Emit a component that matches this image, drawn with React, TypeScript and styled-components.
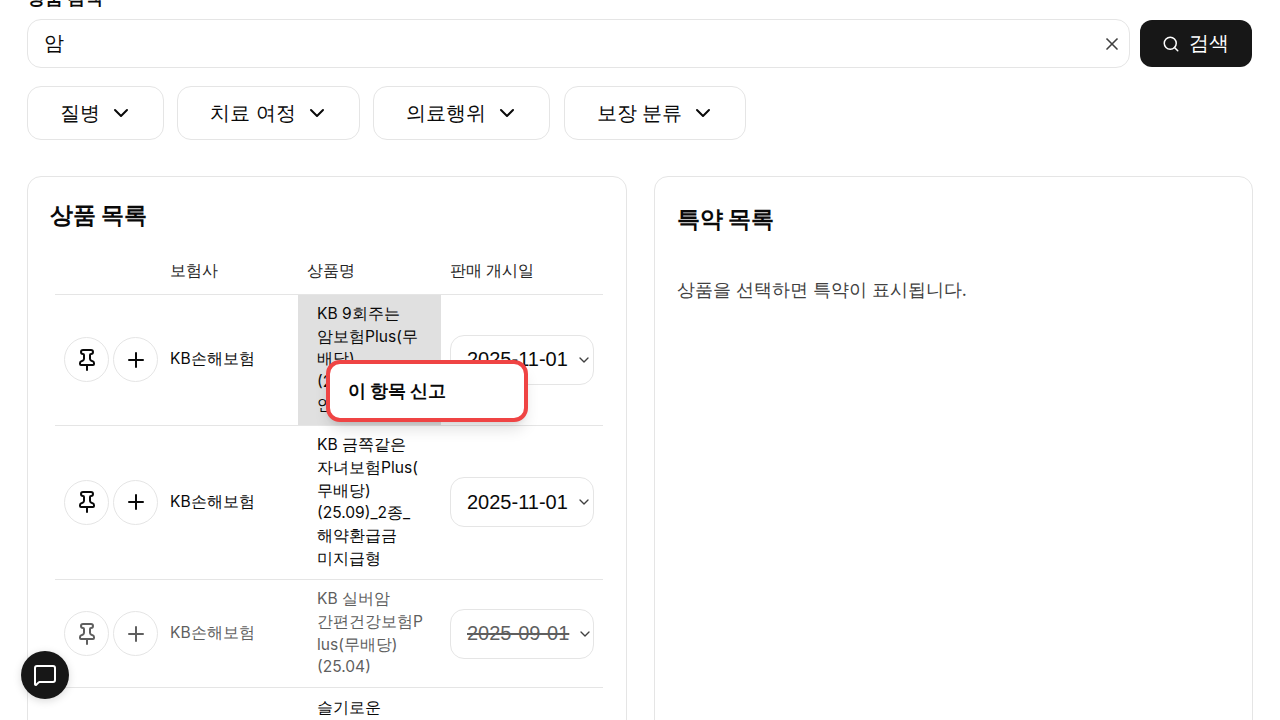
import React from "react";
import styled, { createGlobalStyle } from "styled-components";
import { ChevronDown, MessageSquare, Pin, Plus, Search, X } from "lucide-react";

const Global = createGlobalStyle`
  html, body { margin: 0; height: 720px; overflow: hidden; background: #fff; }
  body { font-family: Inter, sans-serif; color: #0a0a0a; }
  * { box-sizing: border-box; }
`;

const Page = styled.main`
  position: relative;
  height: 720px;
  overflow: hidden;
`;
const Content = styled.div`
  margin-top: -14px;
  padding: 0 27px;
`;
const SearchLabel = styled.div`
  font-size: 17.5px;
  font-weight: 700;
  line-height: 24px;
  margin-bottom: 9px;
`;
const SearchRow = styled.div`
  display: flex;
  gap: 10px;
  align-items: center;
  padding-right: 1px;
`;
const InputBox = styled.div`
  flex: 1;
  height: 49px;
  border: 1px solid #e5e5e5;
  border-radius: 14px;
  display: flex;
  align-items: center;
  justify-content: space-between;
  padding: 0 7px 0 16px;
  font-size: 20.25px;
`;
const ClearBtn = styled.span`
  display: flex;
  color: #404040;
`;
const SearchBtn = styled.button`
  width: 112px;
  height: 47px;
  border: 0;
  border-radius: 12px;
  background: #171717;
  color: #fff;
  font: inherit;
  font-size: 20.25px;
  display: flex;
  align-items: center;
  justify-content: center;
  gap: 9px;
  padding: 0 2px 0 0;
`;
const Filters = styled.div`
  display: flex;
  gap: 13.3px;
  margin-top: 18px;
`;
const FilterBtn = styled.button`
  height: 54px;
  padding: 0 30.25px 0 32px;
  border: 1px solid #e5e5e5;
  border-radius: 14px;
  background: #fff;
  color: #0a0a0a;
  font: inherit;
  font-size: 20.25px;
  display: flex;
  align-items: center;
  gap: 8.75px;
`;
const Columns = styled.div`
  display: grid;
  grid-template-columns: 600px 599px;
  gap: 27px;
  margin-top: 36px;
`;
const Card = styled.section`
  height: 800px;
  border: 1px solid #e5e5e5;
  border-radius: 14px;
  padding: 21px 22px;
`;
const Title = styled.h2<{ $offset?: number }>`
  margin: ${(p) => p.$offset ?? 0}px 0 0;
  font-size: 22.5px;
  font-weight: 700;
  line-height: 34px;
`;
const Hint = styled.p`
  margin: 40px 0 0;
  font-size: 17.5px;
  line-height: 27px;
  color: #404040;
`;
const Table = styled.table`
  width: 548px;
  margin: 14px 0 0 5px;
  table-layout: fixed;
  border-collapse: collapse;
  font-size: 15.575px;
  line-height: 22.75px;
`;
const Th = styled.th`
  height: 48px;
  padding: 3px 9px 0;
  text-align: left;
  font-weight: 400;
  color: #262626;
  border-bottom: 1px solid #e5e5e5;
`;
const Row = styled.tr`
  border-bottom: 1px solid #e5e5e5;
`;
const Td = styled.td<{ $off?: boolean }>`
  padding: 8.25px 9px;
  vertical-align: middle;
  color: ${(p) => (p.$off ? "#5f5f5f" : "#0a0a0a")};
`;
const NameTd = styled(Td)<{ $hover?: boolean }>`
  background: ${(p) => (p.$hover ? "#e0e0e0" : "transparent")};
`;
const NameText = styled.div`
  padding: 0 7px 0 10px;
  word-break: keep-all;
  overflow-wrap: anywhere;
  white-space: pre-line;
`;
const Actions = styled.div`
  display: flex;
  gap: 4px;
`;
const RoundBtn = styled.button<{ $off?: boolean }>`
  flex: none;
  width: 45px;
  height: 45px;
  border: 1px solid #e5e5e5;
  border-radius: 50%;
  background: #fff;
  display: flex;
  align-items: center;
  justify-content: center;
  padding: 0;
  color: ${(p) => (p.$off ? "#5f5f5f" : "#0a0a0a")};
`;
const DateSelect = styled.div<{ $off?: boolean }>`
  width: 144px;
  height: 50px;
  border: 1px solid #e5e5e5;
  border-radius: 14px;
  background: #fff;
  display: flex;
  align-items: center;
  padding-left: 16px;
  font-family: "Liberation Sans", Arial, sans-serif;
  font-size: 20px;
  white-space: nowrap;
  color: ${(p) => (p.$off ? "#5f5f5f" : "#0a0a0a")};
  text-decoration: ${(p) => (p.$off ? "line-through" : "none")};
  svg { margin-left: 8px; color: #404040; flex: none; }
`;
const ContextMenu = styled.div`
  position: absolute;
  left: 326px;
  top: 360px;
  width: 202px;
  height: 62px;
  border: 4px solid #ef4444;
  border-radius: 14px;
  background: #fff;
  box-shadow: 0 10px 15px -3px rgba(0,0,0,.12), 0 4px 6px -4px rgba(0,0,0,.12);
  display: flex;
  align-items: center;
  padding-left: 18px;
  font-size: 17.8px;
  font-weight: 700;
`;
const ChatBtn = styled.button`
  position: absolute;
  left: 21px;
  top: 651px;
  width: 48px;
  height: 48px;
  border: 0;
  border-radius: 50%;
  background: #171717;
  color: #fff;
  display: flex;
  align-items: center;
  justify-content: center;
  padding: 0;
  box-shadow: 0 2px 8px rgba(0,0,0,.15);
`;

const rows = [
  { name: "KB 9회주는 암보험Plus(무배당)(25.09)_2종_연만기형", date: "2025-11-01", hover: true },
  { name: "KB 금쪽같은 자녀보험Plus(무배당)(25.09)_2종_해약환급금 미지급형", date: "2025-11-01" },
  { name: "KB 실버암\n간편건강보험P\nlus(무배당)\n(25.04)", date: "2025-09-01", off: true },
  { name: "슬기로운 암보험(무배당)(25.09)_2종_해약환급금 미지급형", date: "2025-11-01" },
];

export default function App() {
  return (
    <Page>
      <Global />
      <Content>
        <SearchLabel>상품 검색</SearchLabel>
        <SearchRow>
          <InputBox>
            암
            <ClearBtn><X size={20} /></ClearBtn>
          </InputBox>
          <SearchBtn><Search size={18} />검색</SearchBtn>
        </SearchRow>
        <Filters>
          {["질병", "치료 여정", "의료행위", "보장 분류"].map((f) => (
            <FilterBtn key={f}>{f}<ChevronDown size={24} /></FilterBtn>
          ))}
        </Filters>
        <Columns>
          <Card>
            <Title>상품 목록</Title>
            <Table>
              <colgroup>
                <col width={106} /><col width={137} /><col width={143} /><col width={162} />
              </colgroup>
              <thead>
                <tr><Th /><Th>보험사</Th><Th>상품명</Th><Th>판매 개시일</Th></tr>
              </thead>
              <tbody>
                {rows.map((r) => (
                  <Row key={r.name}>
                    <Td>
                      <Actions>
                        <RoundBtn $off={r.off}><Pin size={24} /></RoundBtn>
                        <RoundBtn $off={r.off}><Plus size={24} /></RoundBtn>
                      </Actions>
                    </Td>
                    <Td $off={r.off}>KB손해보험</Td>
                    <NameTd $off={r.off} $hover={r.hover}><NameText>{r.name}</NameText></NameTd>
                    <Td>
                      <DateSelect $off={r.off}>{r.date}<ChevronDown size={16} /></DateSelect>
                    </Td>
                  </Row>
                ))}
              </tbody>
            </Table>
          </Card>
          <Card>
            <Title $offset={4}>특약 목록</Title>
            <Hint>상품을 선택하면 특약이 표시됩니다.</Hint>
          </Card>
        </Columns>
      </Content>
      <ContextMenu>이 항목 신고</ContextMenu>
      <ChatBtn><MessageSquare size={24} /></ChatBtn>
    </Page>
  );
}
